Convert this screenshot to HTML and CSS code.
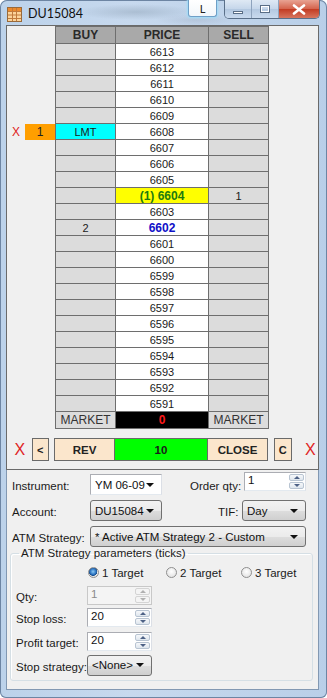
FILE: index.html
```html
<!DOCTYPE html>
<html lang="en">
<head>
    <meta charset="UTF-8">
    <meta name="viewport" content="width=device-width, initial-scale=1.0">
    <title>DU15084</title>
    <link rel="stylesheet" href="styles.css">
</head>
<body>
<div class="window">
    <div class="titlebar">
        <svg class="app-icon" width="15" height="15" viewBox="0 0 15 15">
            <rect x="0.5" y="0.5" width="14" height="14" fill="#fbd39a" stroke="#9a6a3a"/>
            <rect x="1" y="1" width="13" height="3" fill="#ec8a2c"/>
            <path d="M5.5 1v13M9.5 1v13M1 4.5h13M1 8h13M1 11.5h13" stroke="#c07a3c" stroke-width="1"/>
        </svg>
        <span class="title">DU15084</span>
        <button class="lock-btn">L</button>
        <div class="caption-btns">
            <span class="cap cap-min"><i></i></span>
            <span class="cap cap-max"><i></i></span>
            <span class="cap cap-close">
                <svg width="14" height="11" viewBox="0 0 14 11">
                    <path d="M2 1.5l10 8M12 1.5l-10 8" stroke="#fff" stroke-width="2.6" stroke-linecap="round"/>
                </svg>
            </span>
        </div>
    </div>

    <div class="client">
        <div class="ladder-panel">
            <div class="ladder" id="ladder">
                <div class="row head">
                    <div class="gutter"></div>
                    <div class="cell buy">BUY</div>
                    <div class="cell price">PRICE</div>
                    <div class="cell sell">SELL</div>
                </div>
            </div>

            <div class="action-row">
                <span class="cancel-x">X</span>
                <button class="small-btn">&lt;</button>
                <div class="action-group">
                    <button class="act-btn rev">REV</button>
                    <div class="qty-cell">10</div>
                    <button class="act-btn close">CLOSE</button>
                </div>
                <button class="small-btn">C</button>
                <span class="cancel-x">X</span>
            </div>
        </div>

        <div class="order-form">
            <div class="form-row">
                <label class="lbl">Instrument:</label>
                <div class="combo edit w72"><span>YM 06-09</span><i class="arrow"></i></div>
                <label class="lbl qty-lbl">Order qty:</label>
                <div class="spin w62 raised"><span>1</span><div class="spin-btns"><b class="up"></b><b class="down"></b></div></div>
            </div>
            <div class="form-row">
                <label class="lbl">Account:</label>
                <div class="combo list w72"><span>DU15084</span><i class="arrow"></i></div>
                <label class="lbl tif-lbl">TIF:</label>
                <div class="combo list w64"><span>Day</span><i class="arrow"></i></div>
            </div>
            <div class="form-row">
                <label class="lbl">ATM Strategy:</label>
                <div class="combo list w216"><span>* Active ATM Strategy 2 - Custom</span><i class="arrow"></i></div>
            </div>
        </div>

        <fieldset class="atm-group">
            <legend>ATM Strategy parameters (ticks)</legend>
            <div class="radio-row">
                <span class="radio-item r1"><i class="radio checked"></i>1 Target</span>
                <span class="radio-item r2"><i class="radio"></i>2 Target</span>
                <span class="radio-item"><i class="radio"></i>3 Target</span>
            </div>
            <div class="param-row">
                <label class="plbl">Qty:</label>
                <div class="spin w65 disabled"><span>1</span><div class="spin-btns"><b class="up"></b><b class="down"></b></div></div>
            </div>
            <div class="param-row">
                <label class="plbl">Stop loss:</label>
                <div class="spin w65"><span>20</span><div class="spin-btns"><b class="up"></b><b class="down"></b></div></div>
            </div>
            <div class="param-row profit">
                <label class="plbl">Profit target:</label>
                <div class="spin w65"><span>20</span><div class="spin-btns"><b class="up"></b><b class="down"></b></div></div>
            </div>
            <div class="param-row last">
                <label class="plbl">Stop strategy:</label>
                <div class="combo list w65"><span>&lt;None&gt;</span><i class="arrow"></i></div>
            </div>
        </fieldset>
    </div>
</div>

<script>
    // price ladder rows, top to bottom
    const rows = [];
    for (let p = 6613; p >= 6591; p--) {
        rows.push({ price: p, buy: '', sell: '' });
    }
    const special = {
        6608: { buy: 'LMT', buyClass: 'working', order: '1' },
        6604: { priceText: '(1) 6604', priceClass: 'last-price', sell: '1' },
        6602: { priceClass: 'bid-price', buy: '2' }
    };

    const ladder = document.getElementById('ladder');

    rows.forEach(r => {
        const s = special[r.price] || {};
        const row = document.createElement('div');
        row.classList.add('row');
        row.innerHTML = `
            <div class="gutter">${s.order ? '<span class="row-x">X</span><span class="order-qty">' + s.order + '</span>' : ''}</div>
            <div class="cell buy ${s.buyClass || ''}">${s.buy || ''}</div>
            <div class="cell price ${s.priceClass || ''}">${s.priceText || r.price}</div>
            <div class="cell sell">${s.sell || ''}</div>
        `;
        ladder.appendChild(row);
    });

    const market = document.createElement('div');
    market.classList.add('row', 'market');
    market.innerHTML = `
        <div class="gutter"></div>
        <div class="cell buy">MARKET</div>
        <div class="cell price pnl">0</div>
        <div class="cell sell">MARKET</div>
    `;
    ladder.appendChild(market);
</script>
</body>
</html>
```

FILE: styles.css
```css
body {
    margin: 0;
    background: #ffffff;
    font-family: "Liberation Sans", Arial, sans-serif;
}

.window {
    width: 327px;
    height: 698px;
    box-sizing: border-box;
    padding: 0 8px 8px 6px;
    display: flex;
    flex-direction: column;
    border-radius: 7px 7px 6px 6px;
    background: linear-gradient(to right, #bcd2ea 0%, #c7d9ee 40%, #b9cfe8 100%);
    box-shadow: inset 0 0 0 1px #6d85a3;
}

/* Title bar */
.titlebar {
    height: 26px;
    display: flex;
    align-items: center;
    position: relative;
    background:
        radial-gradient(ellipse 60px 8px at 130px 12px, rgba(120, 140, 160, 0.35), rgba(120, 140, 160, 0)),
        radial-gradient(ellipse 40px 6px at 190px 20px, rgba(140, 150, 170, 0.25), rgba(140, 150, 170, 0));
}
.app-icon {
    margin-left: 1px;
    margin-top: 3px;
}
.title {
    margin-left: 6px;
    margin-top: 2px;
    font-family: Lato, "Liberation Sans", sans-serif;
    font-size: 12.5px;
    color: #111;
}
.lock-btn {
    position: absolute;
    left: 182px;
    top: 0;
    width: 29px;
    height: 17px;
    padding: 0;
    border: 1px solid #6f9fc7;
    border-top: none;
    border-radius: 0 0 3px 3px;
    background: linear-gradient(#ffffff, #f2f6fa);
    box-shadow: 0 0 2px 1px #9fdcf7;
    font-family: Lato, "Liberation Sans", sans-serif;
    font-size: 11px;
    color: #222;
}
.caption-btns {
    position: absolute;
    right: -1px;
    top: 0;
    display: flex;
    height: 18px;
    border: 1px solid #5a6f88;
    border-top: none;
    border-radius: 0 0 5px 5px;
    overflow: hidden;
}
.cap {
    width: 26px;
    display: flex;
    align-items: center;
    justify-content: center;
    background: linear-gradient(#dfe9f4, #c5d6ea 50%, #b3c8e0 51%, #c9daee);
    border-right: 1px solid #8ea3bd;
}
.cap i {
    display: block;
    box-sizing: border-box;
}
.cap-min i {
    width: 10px;
    height: 3px;
    margin-top: 6px;
    background: #fff;
    border: 1px solid #5a6e86;
}
.cap-max i {
    width: 10px;
    height: 8px;
    background: transparent;
    border: 1px solid #5a6e86;
    box-shadow: inset 0 0 0 1px #fff;
}
.cap-close {
    width: 40px;
    border-right: none;
    background: linear-gradient(#e8a393, #d4624b 50%, #c23b22 51%, #d7755e);
}

/* Client area */
.client {
    flex: 1;
    background: #f0f0f0;
    border: 1px solid #8298b2;
    border-top: none;
    display: flex;
    flex-direction: column;
}

.ladder-panel {
    border: 1px solid #6a6a6a;
    margin: 0 -1px;
    padding-bottom: 8px;
}

.row {
    display: flex;
    height: 16px;
}
.row.head {
    height: 18px;
}
.row.market {
    height: 17px;
}
.gutter {
    width: 48px;
    display: flex;
    justify-content: flex-end;
    align-items: stretch;
}
.cell {
    box-sizing: border-box;
    display: flex;
    align-items: center;
    justify-content: center;
    border-right: 1px solid #6e6e6e;
    border-bottom: 1px solid #6e6e6e;
    font-size: 11px;
    color: #1a1a1a;
}
.cell.buy {
    width: 61px;
    border-left: 1px solid #6e6e6e;
    background: #dcdcdc;
}
.cell.price {
    width: 93px;
    background: #ffffff;
}
.cell.sell {
    width: 60px;
    background: #dcdcdc;
}
.head .cell {
    border-top: 1px solid #6e6e6e;
    background: #a9a9a9;
    font-size: 12px;
    font-weight: bold;
    color: #2a2a2a;
}
.cell.working {
    background: #00ffff;
}
.cell.last-price {
    background: #ffff00;
    color: #207a10;
    font-weight: bold;
    font-size: 12px;
}
.cell.bid-price {
    color: #1010c8;
    font-weight: bold;
    font-size: 12px;
}
.market .cell.buy,
.market .cell.sell {
    font-size: 12px;
    color: #333;
}
.cell.pnl {
    background: #000000;
    color: #ff1a1a;
    font-weight: bold;
    font-size: 12px;
}
.row-x {
    font-size: 12px;
    color: #e02424;
    margin-right: 5px;
    display: flex;
    align-items: center;
}
.order-qty {
    width: 30px;
    background: #ff9f00;
    display: flex;
    align-items: center;
    justify-content: center;
    font-size: 12px;
    color: #222;
}

/* buttons under the ladder */
.action-row {
    display: flex;
    align-items: center;
    height: 23px;
    margin-top: 9px;
}
.cancel-x {
    font-size: 16px;
    color: #e02424;
    width: 16px;
    text-align: center;
}
.action-row .cancel-x:first-child {
    margin-left: 5px;
    margin-right: 4px;
}
.action-row .cancel-x:last-child {
    margin-left: 11px;
}
.small-btn {
    width: 18px;
    height: 23px;
    padding: 0;
    border: 1px solid #6a6a6a;
    background: #fbe6cc;
    font-family: "Liberation Sans", Arial, sans-serif;
    font-size: 11px;
    font-weight: bold;
    color: #222;
}
.action-row .small-btn:first-of-type {
    margin-right: 5px;
}
.action-group {
    display: flex;
    height: 23px;
    margin-right: 6px;
}
.act-btn {
    width: 61px;
    height: 23px;
    padding: 0;
    border: 1px solid #6a6a6a;
    background: #fbe6cc;
    font-family: "Liberation Sans", Arial, sans-serif;
    font-size: 11.5px;
    font-weight: bold;
    color: #222;
}
.qty-cell {
    width: 92px;
    height: 23px;
    box-sizing: border-box;
    border-top: 1px solid #6a6a6a;
    border-bottom: 1px solid #6a6a6a;
    background: #00ff00;
    display: flex;
    align-items: center;
    justify-content: center;
    font-size: 11.5px;
    font-weight: bold;
    color: #1a1a1a;
}

/* order form */
.order-form {
    padding: 4px 0 0 5px;
    display: flex;
    flex-direction: column;
    gap: 5px;
    font-family: "Liberation Sans", Arial, sans-serif;
    font-size: 11.5px;
}
.form-row {
    display: flex;
    align-items: center;
    height: 21px;
    white-space: nowrap;
}
.lbl {
    width: 78px;
    flex-shrink: 0;
    color: #1a1a1a;
    padding-top: 3px;
}
.qty-lbl {
    width: 54px;
    margin-left: 28px;
}
.tif-lbl {
    width: 24px;
    margin-left: 56px;
}

.combo {
    box-sizing: border-box;
    height: 21px;
    flex-shrink: 0;
    display: flex;
    align-items: center;
    justify-content: space-between;
    padding: 0 7px 0 4px;
    white-space: nowrap;
    color: #111;
}
.combo.edit {
    background: #ffffff;
    border: 1px solid #abadb3;
    border-right-color: #dbdfe6;
    border-bottom-color: #e3e9ef;
}
.combo.list {
    border: 1px solid #707070;
    border-radius: 3px;
    background: linear-gradient(#f2f2f2, #ebebeb 50%, #dddddd 51%, #cfcfcf);
}
.arrow {
    width: 0;
    height: 0;
    flex-shrink: 0;
    border-left: 4px solid transparent;
    border-right: 4px solid transparent;
    border-top: 4px solid #111;
}
.w72 { width: 72px; }
.w64 { width: 64px; }
.w216 { width: 216px; }
.w62 { width: 62px; }
.w65 { width: 65px; }

.spin {
    box-sizing: border-box;
    height: 19px;
    flex-shrink: 0;
    display: flex;
    justify-content: space-between;
    background: #ffffff;
    border: 1px solid #abadb3;
    border-right-color: #dbdfe6;
    border-bottom-color: #e3e9ef;
    color: #111;
}
.spin span {
    padding: 0 0 0 3px;
    line-height: 15px;
}
.spin.raised {
    align-self: flex-start;
    margin-top: -2px;
}
.spin.disabled {
    background: #f4f4f4;
    border-color: #c8c8c8;
    color: #8a8a8a;
}
.spin-btns {
    width: 15px;
    display: flex;
    flex-direction: column;
    padding: 1px 1px 1px 0;
    gap: 1px;
}
.spin-btns b {
    flex: 1;
    border: 1px solid #b8c4d2;
    border-radius: 2px;
    background: linear-gradient(#f6f8fa, #dfe6ee);
    display: flex;
    align-items: center;
    justify-content: center;
}
.spin-btns b::after {
    content: "";
    border-left: 3px solid transparent;
    border-right: 3px solid transparent;
}
.spin-btns .up::after {
    border-bottom: 3px solid #4d6185;
}
.spin-btns .down::after {
    border-top: 3px solid #4d6185;
}
.spin.disabled .spin-btns b {
    border-color: #d4d4d4;
    background: #f4f4f4;
}
.spin.disabled .spin-btns .up::after {
    border-bottom-color: #b0b0b0;
}
.spin.disabled .spin-btns .down::after {
    border-top-color: #b0b0b0;
}

/* ATM group box */
.atm-group {
    margin: 0 5px 8px 3px;
    padding: 6px 0 5px 0;
    border: 1px solid #d5dfe5;
    border-radius: 3px;
    box-shadow: inset 1px 1px 0 #ffffff;
    font-family: "Liberation Sans", Arial, sans-serif;
    font-size: 11.5px;
    color: #1a1a1a;
    flex: 1;
    white-space: nowrap;
}
.atm-group legend {
    padding: 0 2px;
    margin-left: 8px;
}
.radio-row {
    display: flex;
    align-items: center;
    padding-left: 77px;
    height: 15px;
}
.radio-item {
    display: flex;
    align-items: center;
    gap: 3px;
}
.radio-item.r1 { width: 78px; }
.radio-item.r2 { width: 75px; }
.radio {
    width: 11px;
    height: 11px;
    box-sizing: border-box;
    border-radius: 50%;
    border: 1px solid #8f8f8f;
    background: radial-gradient(circle at 50% 40%, #ffffff, #dcdcdc);
}
.radio.checked {
    background: radial-gradient(circle at 45% 40%, #8ccaf5 0px, #2a72c0 3px, #1c4f8a 4px, #eaeaea 4.5px, #d4d4d4 100%);
}
.param-row {
    display: flex;
    align-items: center;
    height: 19px;
    margin-top: 3px;
}
.radio-row + .param-row {
    margin-top: 6px;
}
.param-row.profit {
    margin-top: 5px;
}
.param-row.last {
    height: 20px;
    margin-top: 4px;
}
.plbl {
    width: 71px;
    flex-shrink: 0;
    padding-left: 5px;
    padding-top: 3px;
}
```
